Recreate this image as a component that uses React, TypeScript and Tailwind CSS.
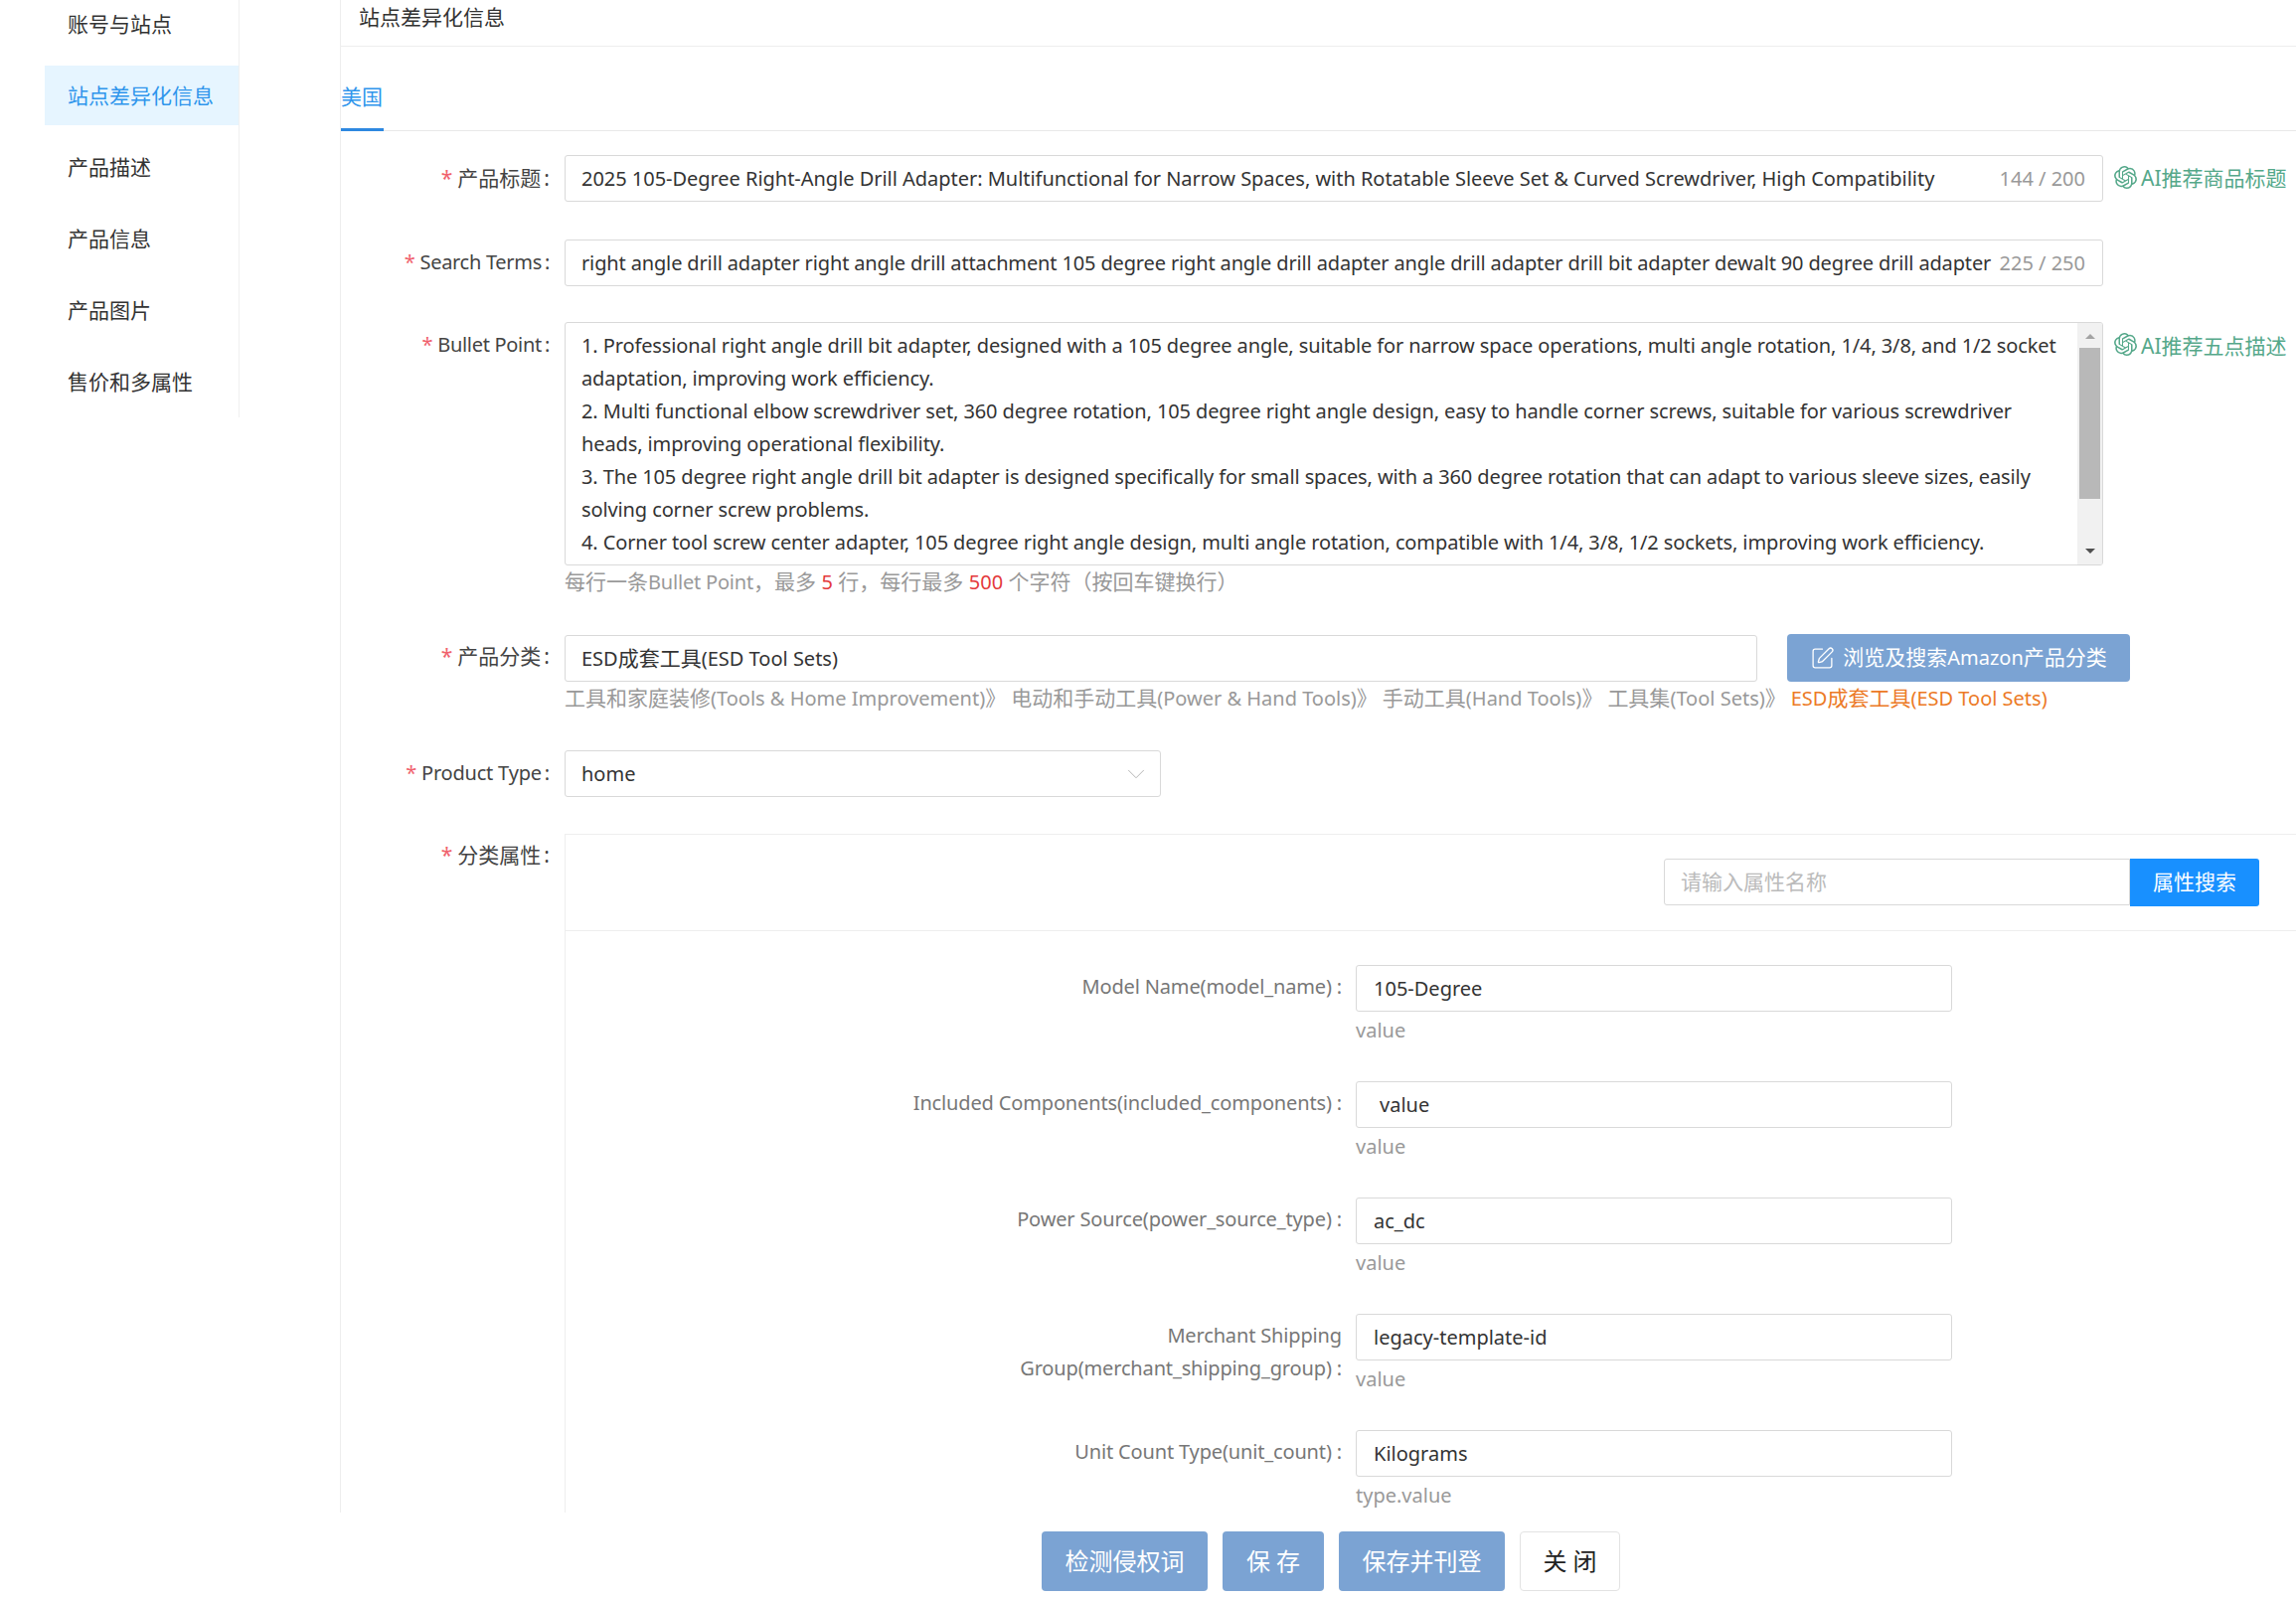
import React from 'react'
import { SquarePen, ChevronDown } from 'lucide-react'
import { SiOpenai } from 'react-icons/si'

const navItems = ['账号与站点', '站点差异化信息', '产品描述', '产品信息', '产品图片', '售价和多属性']

const bullets = [
  '1. Professional right angle drill bit adapter, designed with a 105 degree angle, suitable for narrow space operations, multi angle rotation, 1/4, 3/8, and 1/2 socket',
  'adaptation, improving work efficiency.',
  '2. Multi functional elbow screwdriver set, 360 degree rotation, 105 degree right angle design, easy to handle corner screws, suitable for various screwdriver',
  'heads, improving operational flexibility.',
  '3. The 105 degree right angle drill bit adapter is designed specifically for small spaces, with a 360 degree rotation that can adapt to various sleeve sizes, easily',
  'solving corner screw problems.',
  '4. Corner tool screw center adapter, 105 degree right angle design, multi angle rotation, compatible with 1/4, 3/8, 1/2 sockets, improving work efficiency.',
]

const crumbs = [
  { zh: '工具和家庭装修', en: '(Tools & Home Improvement)' },
  { zh: '电动和手动工具', en: '(Power & Hand Tools)' },
  { zh: '手动工具', en: '(Hand Tools)' },
  { zh: '工具集', en: '(Tool Sets)' },
]

const attrs = [
  { label: 'Model Name(model_name)', value: '105-Degree', hint: 'value' },
  { label: 'Included Components(included_components)', value: 'value', hint: 'value', indent: true },
  { label: 'Power Source(power_source_type)', value: 'ac_dc', hint: 'value' },
  { label: 'Merchant Shipping Group(merchant_shipping_group)', value: 'legacy-template-id', hint: 'value' },
  { label: 'Unit Count Type(unit_count)', value: 'Kilograms', hint: 'type.value' },
]

const Label = ({ text, className = '' }: { text: string; className?: string }) => (
  <div className={`w-[225px] shrink-0 pr-[15px] text-right leading-[33px] text-[#444] ${className}`}>
    <span className="text-[#f0616d] mr-[5px]">*</span>
    {text}
    <span className="ml-[3px]">:</span>
  </div>
)

const AiLink = ({ text, className = '' }: { text: string; className?: string }) => (
  <div className={`ml-[11px] flex items-center gap-[4px] whitespace-nowrap text-[#55a88a] text-[21px] ${className}`}>
    <SiOpenai className="w-[23px] h-[23px] mb-[4px]" />
    {text}
  </div>
)

const Button = ({ text, width, muted = true }: { text: string; width: string; muted?: boolean }) => (
  <button
    className={`h-[60px] rounded-[4px] text-[24px] whitespace-pre ${width} ${
      muted ? 'bg-[#7ba3d3] text-white' : 'bg-white border border-[#e3e3e3] text-[#222]'
    }`}
  >
    {text}
  </button>
)

export default function App() {
  return (
    <div className="flex h-[1608px] overflow-hidden bg-white text-[20px] text-[#333] [font-family:'Noto_Sans','Noto_Sans_CJK_SC',sans-serif]">
      <div className="w-[342px] shrink-0 pl-[45px]">
        <div className="w-[196px] -mt-[6px] pb-[6px] border-r border-[#f0f0f0] flex flex-col gap-[12px]">
          {navItems.map((item) => (
            <div
              key={item}
              className={`h-[60px] pl-[23px] pt-[2px] flex items-center text-[21px] ${
                item === '站点差异化信息' ? 'bg-[#e6f5ff] text-[#2f95ec]' : 'text-[#333]'
              }`}
            >
              {item}
            </div>
          ))}
        </div>
      </div>

      <div className="flex-1 min-w-0 flex flex-col">
        <div className="flex-1 min-h-0 overflow-hidden border-l border-[#eeeeee]">
          <div className="h-[47px] pl-[18px] pb-[10px] flex items-center border-b border-[#eeeeee] text-[21px]">站点差异化信息</div>

          <div className="h-[85px] border-b border-[#e8e8e8] flex items-end">
            <div className="h-[53px] w-[43px] -mb-px flex items-start pt-[3px] border-b-[3px] border-[#2d88e0] text-[#2f95ec] text-[21px]">美国</div>
          </div>

          <div className="pt-[24px]">
            <div className="flex h-[47px] items-center">
              <Label text="产品标题" className="text-[21px]" />
              <div className="w-[1548px] h-[47px] shrink-0 border border-[#d9d9d9] rounded-[3px] pl-[16px] pr-[17px] pt-[1px] flex items-center justify-between whitespace-nowrap">
                <span className="tracking-[-0.03px]">2025 105-Degree Right-Angle Drill Adapter: Multifunctional for Narrow Spaces, with Rotatable Sleeve Set &amp; Curved Screwdriver, High Compatibility</span>
                <span className="text-[#999]">144 / 200</span>
              </div>
              <AiLink text="AI推荐商品标题" className="pt-[1px]" />
            </div>

            <div className="flex h-[47px] items-center mt-[38px]">
              <Label text="Search Terms" className="-mt-[3px] tracking-[-0.3px]" />
              <div className="w-[1548px] h-[47px] shrink-0 border border-[#d9d9d9] rounded-[3px] pl-[16px] pr-[17px] pt-[1px] flex items-center justify-between whitespace-nowrap">
                <span className="tracking-[-0.14px]">right angle drill adapter right angle drill attachment 105 degree right angle drill adapter angle drill adapter drill bit adapter dewalt 90 degree drill adapter</span>
                <span className="text-[#999]">225 / 250</span>
              </div>
            </div>

            <div className="flex items-start mt-[36px]">
              <Label text="Bullet Point" className="pt-[6px] tracking-[-0.3px]" />
              <div className="w-[1548px] h-[245px] shrink-0 border border-[#d9d9d9] rounded-[3px] flex overflow-hidden">
                <div className="flex-1 min-w-0 pl-[16px] pt-[6px] leading-[33px] whitespace-nowrap overflow-hidden tracking-[-0.11px]">
                  {bullets.map((line) => (
                    <div key={line}>{line}</div>
                  ))}
                </div>
                <div className="w-[25px] shrink-0 bg-[#f1f1f1] flex flex-col items-center justify-between">
                  <div className="h-[25px] flex items-center justify-center pt-[2px]">
                    <div className="border-x-[5px] border-x-transparent border-b-[5px] border-b-[#a3a3a3]" />
                  </div>
                  <div className="w-[21px] flex-1 bg-[#b8b8b8]" />
                  <div className="h-[66px] flex items-end justify-center pb-[11px]">
                    <div className="border-x-[5px] border-x-transparent border-t-[5px] border-t-[#505050]" />
                  </div>
                </div>
              </div>
              <AiLink text="AI推荐五点描述" className="pt-[9px]" />
            </div>
            <div className="ml-[225px] h-[33px] leading-[33px] text-[#999] whitespace-nowrap text-[21px]">
              每行一条<span className="text-[20px] tracking-[-0.2px]">Bullet Point</span>，最多 <span className="text-[#e4393c] text-[20px]">5</span> 行，每行最多 <span className="text-[#e4393c] text-[20px]">500</span> 个字符（按回车键换行）
            </div>

            <div className="flex items-end mt-[36px]">
              <Label text="产品分类" className="pb-[9px] text-[21px]" />
              <div className="w-[1200px] h-[47px] shrink-0 border border-[#d9d9d9] rounded-[3px] px-[16px] flex items-center">
                ESD<span className="text-[21px]">成套工具</span>(ESD Tool Sets)
              </div>
              <button className="ml-[30px] h-[48px] w-[345px] rounded-[4px] bg-[#7ba3d3] text-white flex items-center justify-center gap-[8px] whitespace-nowrap text-[21px]">
                <SquarePen className="w-[25px] h-[25px]" strokeWidth={1.25} />
                <span>浏览及搜索<span className="text-[20px]">Amazon</span>产品分类</span>
              </button>
            </div>
            <div className="ml-[225px] h-[33px] leading-[33px] flex text-[#999] whitespace-nowrap">
              {crumbs.map((crumb) => (
                <span key={crumb.zh} className="mr-[5px]">
                  <span className="text-[21px]">{crumb.zh}</span>
                  {crumb.en}
                  <span className="text-[21px]">》</span>
                </span>
              ))}
              <span className="text-[#ec7a26]">
                ESD<span className="text-[21px]">成套工具</span>(ESD Tool Sets)
              </span>
            </div>

            <div className="flex items-center mt-[36px]">
              <Label text="Product Type" className="-mt-[3px] tracking-[-0.2px]" />
              <div className="w-[600px] h-[47px] shrink-0 border border-[#d9d9d9] rounded-[3px] pl-[16px] pr-[9px] flex items-center justify-between">
                <span>home</span>
                <ChevronDown className="w-[30px] h-[30px] text-[#b5b5b5]" strokeWidth={0.8} />
              </div>
            </div>

            <div className="flex items-start mt-[37px]">
              <Label text="分类属性" className="pt-[5px] text-[21px]" />
              <div className="flex-1 min-w-0 border-l border-t border-[#eeeeee]">
                <div className="h-[97px] border-b border-[#eeeeee] flex items-start justify-end pt-[24px] pr-[37px] text-[21px]">
                  <div className="w-[469px] h-[47px] border border-[#d9d9d9] rounded-l-[3px] pl-[16px] flex items-center text-[#bbb]">请输入属性名称</div>
                  <button className="w-[130px] h-[48px] bg-[#1890ff] text-white rounded-r-[3px]">属性搜索</button>
                </div>
                <div className="pt-[34px]">
                  {attrs.map((attr) => (
                    <div key={attr.label} className="flex items-start mb-[35px]">
                      <div className="w-[795px] shrink-0 pl-[345px] pr-[14px] pt-[5px] text-right leading-[33px] text-[#777] tracking-[-0.15px]">
                        {`${attr.label} :`}
                      </div>
                      <div className="w-[600px]">
                        <div className={`h-[47px] pt-[1px] border border-[#d9d9d9] rounded-[3px] flex items-center ${attr.indent ? 'pl-[23px]' : 'pl-[17px]'}`}>{attr.value}</div>
                        <div className="mt-[2px] h-[33px] leading-[33px] text-[#999]">{attr.hint}</div>
                      </div>
                    </div>
                  ))}
                </div>
              </div>
            </div>
          </div>
        </div>

        <div className="h-[86px] shrink-0 pt-[19px] pl-[706px] flex items-start gap-[15px]">
          <Button text="检测侵权词" width="w-[167px]" />
          <Button text="保 存" width="w-[102px]" />
          <Button text="保存并刊登" width="w-[167px]" />
          <Button text="关 闭" width="w-[101px]" muted={false} />
        </div>
      </div>
    </div>
  )
}
